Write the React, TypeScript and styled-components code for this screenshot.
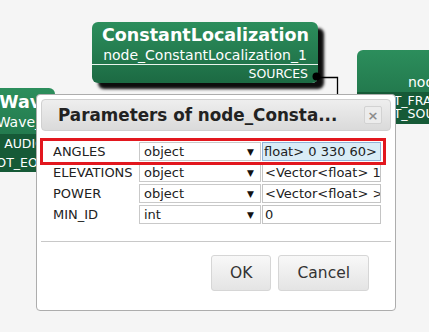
import React from 'react';
import styled, { createGlobalStyle } from 'styled-components';

const GlobalStyle = createGlobalStyle`
  html, body {
    margin: 0;
    padding: 0;
    background: #f5f5f5;
  }
  body {
    font-family: "DejaVu Sans", Verdana, sans-serif;
  }
`;

const Canvas = styled.div`
  position: relative;
  width: 429px;
  height: 332px;
  overflow: hidden;
  background: #f5f5f5;
`;

// diagram nodes sit on a free canvas, so they are placed by coordinates
const Node = styled.div<{ $x: number; $y: number; $w: number; $shadow?: boolean }>`
  position: absolute;
  left: ${(p) => p.$x}px;
  top: ${(p) => p.$y}px;
  width: ${(p) => p.$w}px;
  border-radius: 6px;
  overflow: hidden;
  color: #fff;
  background: linear-gradient(#2c8e5c, #1c6a43);
  box-shadow: ${(p) => (p.$shadow ? '6px 6px 3px rgba(0, 0, 0, 0.95)' : 'none')};
`;

const NodeHead = styled.div<{ $align?: string; $pad?: string }>`
  display: flex;
  flex-direction: column;
  text-align: ${(p) => p.$align || 'center'};
  padding: ${(p) => p.$pad || '2px 10px 0'};
  white-space: nowrap;
`;

const NodeTitle = styled.div`
  font-weight: bold;
  font-size: 17.5px;
  line-height: 22px;
`;

const NodeName = styled.div<{ $inset?: number }>`
  font-size: 14px;
  line-height: 18px;
  padding-right: ${(p) => p.$inset || 0}px;
`;

const NodePorts = styled.div<{ $divider?: boolean; $line: number; $pad: string }>`
  display: flex;
  flex-direction: column;
  font-size: 12.5px;
  line-height: ${(p) => p.$line}px;
  padding: ${(p) => p.$pad};
  white-space: nowrap;
  border-top: ${(p) => (p.$divider ? '1px solid #e8f3ec' : 'none')};
  background: ${(p) => (p.$divider ? 'transparent' : '#165a37')};
`;

const PortRow = styled.div`
  display: flex;
  justify-content: space-between;
  gap: 10px;
`;

const PortName = styled.span<{ $inset?: number }>`
  padding-right: ${(p) => p.$inset || 0}px;
`;

const Wires = styled.svg`
  position: absolute;
  left: 0;
  top: 0;
  pointer-events: none;
`;

const Dialog = styled.div`
  position: absolute;
  left: 36px;
  top: 94px;
  width: 350px;
  padding: 4px;
  background: #fff;
  border: 1px solid #adadad;
  border-radius: 4px;
  z-index: 2;
`;

const TitleBar = styled.div`
  display: flex;
  align-items: center;
  justify-content: space-between;
  height: 30px;
  padding: 0 8px 0 16px;
  border: 1px solid #d0d0d0;
  border-radius: 4px;
  background: linear-gradient(#eeeeee, #dadada);
`;

const Title = styled.span`
  font-weight: bold;
  font-size: 16.8px;
  color: #222;
  white-space: nowrap;
`;

const CloseButton = styled.span`
  width: 16px;
  height: 16px;
  display: flex;
  align-items: center;
  justify-content: center;
  border: 1px solid #d2d2d2;
  border-radius: 2px;
  background: #ececec;
  color: #8c8c8c;
  font-size: 13px;
  font-weight: bold;
  line-height: 1;
`;

const ParamList = styled.div`
  display: flex;
  flex-direction: column;
  padding: 10px 8px 0 2px;
`;

const ParamRow = styled.div<{ $active?: boolean }>`
  display: grid;
  grid-template-columns: 85px 122px 119px;
  column-gap: 1px;
  align-items: center;
  height: 21px;
  padding: 0 5px 0 10px;
  outline: ${(p) => (p.$active ? '3px solid #e2171e' : 'none')};
  position: relative;
  z-index: ${(p) => (p.$active ? 1 : 0)};
`;

const ParamLabel = styled.span`
  font-size: 13px;
  color: #222;
  white-space: nowrap;
  overflow: hidden;
`;

const TypeSelect = styled.div`
  display: flex;
  align-items: center;
  justify-content: space-between;
  height: 17px;
  padding: 0 6px 0 4px;
  border: 1px solid #c9c9c9;
  background: #fff;
  font-size: 13px;
  color: #222;
`;

const Arrow = styled.span`
  font-size: 9px;
  color: #111;
`;

const ValueInput = styled.div<{ $selected?: boolean }>`
  height: 17px;
  line-height: 17px;
  padding: 0 2px;
  padding-left: ${(p) => (p.$selected ? '1px' : '2px')};
  border: 1px solid ${(p) => (p.$selected ? '#8fb2d8' : '#c4c4c4')};
  background: ${(p) => (p.$selected ? '#d9ecf6' : '#fff')};
  font-size: 13px;
  color: #222;
  white-space: nowrap;
  overflow: hidden;
`;

const ButtonPane = styled.div`
  display: flex;
  justify-content: flex-end;
  gap: 7px;
  margin-top: 16px;
  padding: 13px 22px 15px 0;
  border-top: 1px solid #c8c8c8;
`;

const Button = styled.button`
  height: 36px;
  padding: 0 18px;
  border: 1px solid #d6d6d6;
  border-radius: 3px;
  background: linear-gradient(#f8f8f8, #e4e4e4);
  font-family: "DejaVu Sans", Verdana, sans-serif;
  font-size: 15.5px;
  color: #333;
`;

const params = [
  { name: 'ANGLES', type: 'object', value: 'float> 0 330 60>', active: true },
  { name: 'ELEVATIONS', type: 'object', value: '<Vector<float> 16.7>' },
  { name: 'POWER', type: 'object', value: '<Vector<float> >' },
  { name: 'MIN_ID', type: 'int', value: '0' },
];

export default function App() {
  return (
    <Canvas>
      <GlobalStyle />

      <Node $x={-190} $y={88} $w={245}>
        <NodeHead $align="right" $pad="3px 2px 0 0">
          <NodeTitle>AudioStreamFromWave</NodeTitle>
          <NodeName $inset={2}>node_AudioStreamFromWave_1</NodeName>
        </NodeHead>
        <NodePorts $line={19} $pad="0 2px 0 4px" style={{ marginTop: 3 }}>
          <PortRow>
            <PortName>INPUT</PortName>
            <PortName $inset={8}>AUDIO</PortName>
          </PortRow>
          <PortRow>
            <PortName />
            <PortName $inset={8}>NOT_EOF</PortName>
          </PortRow>
        </NodePorts>
      </Node>

      <Node $x={92} $y={22} $w={226} $shadow>
        <NodeHead>
          <NodeTitle>ConstantLocalization</NodeTitle>
          <NodeName>node_ConstantLocalization_1</NodeName>
        </NodeHead>
        <NodePorts $divider $line={17} $pad="0 10px 1px">
          <PortRow>
            <PortName />
            <PortName>SOURCES</PortName>
          </PortRow>
        </NodePorts>
      </Node>

      <Node $x={357} $y={50} $w={240}>
        <NodeHead $align="left" $pad="1px 0 1px 51px">
          <NodeTitle>&nbsp;</NodeTitle>
          <NodeName>node_DisplayLocalization_1</NodeName>
        </NodeHead>
        <NodePorts $line={13} $pad="2px 4px 4px 7px">
          <PortRow>
            <PortName>INPUT_FRAMES</PortName>
          </PortRow>
          <PortRow>
            <PortName>INPUT_SOURCES</PortName>
          </PortRow>
        </NodePorts>
      </Node>

      <Wires width={429} height={332}>
        <polyline points="317,77.5 337.5,77.5 337.5,100" fill="none" stroke="#000" strokeWidth={1.3} />
        <circle cx={316.5} cy={76.5} r={4} fill="#000" />
      </Wires>

      <Dialog>
        <TitleBar>
          <Title>Parameters of node_Consta...</Title>
          <CloseButton>×</CloseButton>
        </TitleBar>
        <ParamList>
          {params.map((p) => (
            <ParamRow key={p.name} $active={p.active}>
              <ParamLabel>{p.name}</ParamLabel>
              <TypeSelect>
                <span>{p.type}</span>
                <Arrow>▼</Arrow>
              </TypeSelect>
              <ValueInput $selected={p.active}>{p.value}</ValueInput>
            </ParamRow>
          ))}
        </ParamList>
        <ButtonPane>
          <Button>OK</Button>
          <Button>Cancel</Button>
        </ButtonPane>
      </Dialog>
    </Canvas>
  );
}
